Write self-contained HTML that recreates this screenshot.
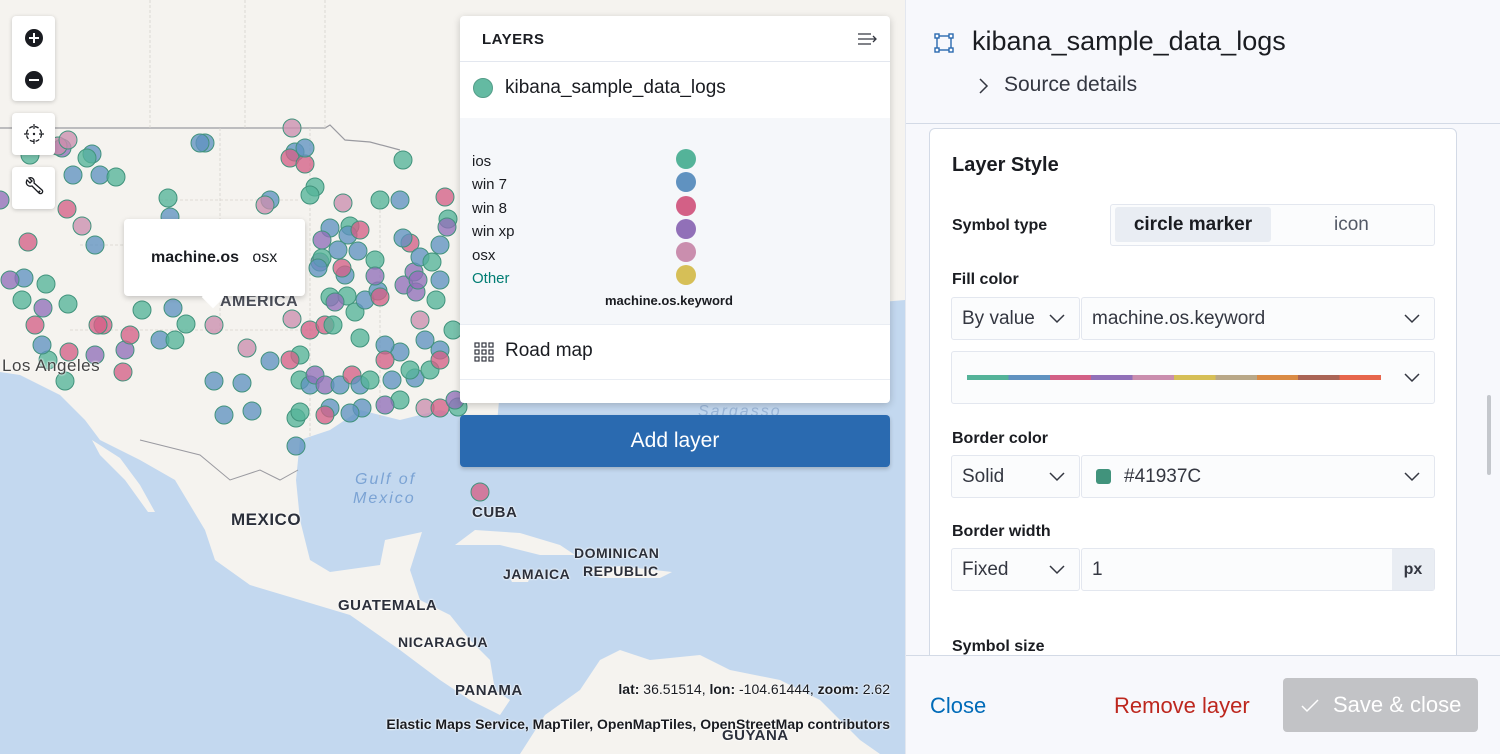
<!DOCTYPE html>
<html><head><meta charset="utf-8"><style>
*{box-sizing:border-box;margin:0;padding:0}
body{width:1500px;height:754px;overflow:hidden;font-family:"Liberation Sans",sans-serif;position:relative;background:#fff;color:#1a1c21}
.abs{position:absolute}
.ctl{position:absolute;left:12px;width:43px;background:#fff;border-radius:4px;box-shadow:0 1px 4px rgba(0,0,0,.2)}
.lbl{position:absolute;font-weight:bold;color:#2b2f3a;font-size:16px;letter-spacing:.5px;text-shadow:0 0 2px #fff,0 0 2px #fff}
.sel{position:absolute;background:#fbfcfd;border:1px solid #e3e7ef;border-radius:3px;font-size:19px;color:#343741;padding-left:10px;display:flex;align-items:center}
.chev{position:absolute;right:14px;top:50%;margin-top:-5px}
.flab{position:absolute;left:952px;font-size:16px;font-weight:bold;color:#1a1c21}
</style></head><body>
<svg class="abs" style="left:0;top:0" width="905" height="754" viewBox="0 0 905 754">
<rect width="905" height="754" fill="#c3d8ef"/>
<path d="M0,0 L905,0 L905,300 L560,330 L500,390 L495,445 L475,420 L440,410 L400,420 L360,410 L330,430 L300,440 L296,480 L300,520 L310,560 L330,572 L380,565 L385,540 L422,532 L410,570 L420,600 L450,615 L470,640 L490,660 L495,690 L510,700 L500,715 L470,700 L440,680 L400,650 L350,615 L300,600 L250,585 L215,560 L205,530 L175,480 L140,460 L100,440 L85,420 L60,395 L20,375 L0,372 Z" fill="#f5f3ef"/>
<path d="M92,440 L120,458 L140,485 L155,512 L148,512 L125,480 L100,455Z" fill="#f5f3ef"/>
<path d="M520,754 L545,715 L580,690 L600,660 L620,650 L650,660 L700,655 L730,670 L780,680 L820,700 L860,740 L880,754Z" fill="#f5f3ef"/>
<path d="M455,545 L475,530 L520,533 L560,545 L575,555 L540,555 L500,545 Z" fill="#f5f3ef"/>
<path d="M590,570 L620,566 L672,572 L660,578 L600,578Z" fill="#f5f3ef"/>
<path d="M510,578 L530,577 L528,582 L512,582Z" fill="#f5f3ef"/>
<path d="M0,128 L325,128 L330,125 L345,140 L370,142 L400,150" stroke="#9a9aa0" stroke-width="1.2" fill="none"/>
<path d="M140,440 L200,455 L230,480 L260,470 L280,480 L298,470" stroke="#9a9aa0" stroke-width="1" fill="none"/>
<g stroke="#d6d3cd" stroke-width=".8" fill="none" stroke-dasharray="3,2">
<path d="M150,0 L150,128 M245,0 L245,128 M325,0 L325,128 M220,128 L220,330 M160,200 L300,200 M80,245 L220,245 M70,330 L330,330 M310,128 L310,440 M380,200 L380,420"/>
</g>
<g id="dots" stroke="#41937C" stroke-width="1" fill-opacity=".78"></g>
<text x="355" y="484" font-family="Liberation Sans" font-style="italic" font-size="16" fill="#7ba3d4" letter-spacing="2">Gulf of</text>
<text x="353" y="503" font-family="Liberation Sans" font-style="italic" font-size="16" fill="#7ba3d4" letter-spacing="2">Mexico</text>
<text x="698" y="416" font-family="Liberation Sans" font-style="italic" font-size="16" fill="#9bb6d8" letter-spacing="2">Sargasso</text>
</svg>
<div class="lbl" style="left:2px;top:356px;font-weight:normal;color:#444;font-size:17px">Los Angeles</div>
<div class="lbl" style="left:220px;top:293px;color:#4a4d57">AMERICA</div>
<div class="lbl" style="left:231px;top:510px;font-size:17px">MEXICO</div>
<div class="lbl" style="left:472px;top:504px;font-size:15px">CUBA</div>
<div class="lbl" style="left:574px;top:545px;font-size:14px">DOMINICAN</div>
<div class="lbl" style="left:583px;top:563px;font-size:14px">REPUBLIC</div>
<div class="lbl" style="left:503px;top:566px;font-size:14px">JAMAICA</div>
<div class="lbl" style="left:338px;top:597px;font-size:15px">GUATEMALA</div>
<div class="lbl" style="left:398px;top:634px;font-size:14px">NICARAGUA</div>
<div class="lbl" style="left:455px;top:682px;font-size:15px">PANAMA</div>
<div class="lbl" style="left:722px;top:727px;font-size:15px">GUYANA</div>
<div class="abs" style="right:610px;top:681px;font-size:14px;color:#1a1c21;text-shadow:0 0 2px #fff,0 0 2px #fff"><b>lat:</b> 36.51514, <b>lon:</b> -104.61444, <b>zoom:</b> 2.62</div>
<div class="abs" style="right:610px;top:716px;font-size:14px;font-weight:bold;color:#1a1c21;text-shadow:0 0 2px #fff,0 0 2px #fff">Elastic Maps Service, MapTiler, OpenMapTiles, OpenStreetMap contributors</div>

<div class="ctl" style="top:16px;height:85px">
<svg class="abs" style="left:12px;top:12px" width="20" height="20"><circle cx="10" cy="10" r="9" fill="#1a1c21"/><path d="M10 5v10M5 10h10" stroke="#fff" stroke-width="2"/></svg>
<svg class="abs" style="left:12px;top:54px" width="20" height="20"><circle cx="10" cy="10" r="9" fill="#1a1c21"/><path d="M5 10h10" stroke="#fff" stroke-width="2"/></svg>
</div>
<div class="ctl" style="top:113px;height:42px">
<svg class="abs" style="left:12px;top:11px" width="20" height="20"><circle cx="10" cy="10" r="7.5" fill="none" stroke="#1a1c21" stroke-width="1.3" stroke-dasharray="4,2"/><path d="M10 0v5M10 15v5M0 10h5M15 10h5" stroke="#1a1c21" stroke-width="1.2"/><circle cx="10" cy="10" r="1.2" fill="#1a1c21"/></svg>
</div>
<div class="ctl" style="top:167px;height:42px">
<svg class="abs" style="left:11px;top:10px" width="22" height="22" viewBox="0 0 22 22"><path d="M4 3 L7 6 L9 4 L6 1 C9 0 12 2 11 6 L19 13 C21 15 18 18 16 16 L9 9 C5 10 2 7 4 3Z" fill="none" stroke="#1a1c21" stroke-width="1.3"/><circle cx="16.5" cy="14.5" r="1" fill="#1a1c21"/></svg>
</div>

<div class="abs" style="left:124px;top:219px;width:181px;height:77px;background:#fff;border-radius:4px;box-shadow:0 2px 6px rgba(0,0,0,.2)"></div>
<div class="abs" style="left:205px;top:289px;width:16px;height:16px;background:#fff;transform:rotate(45deg)"></div>
<div class="abs" style="left:151px;top:249px;font-size:16px"><b>machine.os</b>&nbsp;&nbsp; osx</div>

<div class="abs" style="left:460px;top:16px;width:430px;height:387px;background:#fff;border-radius:4px;box-shadow:0 2px 8px rgba(0,0,0,.2);overflow:hidden">
 <div class="abs" style="left:22px;top:15px;font-size:15px;font-weight:bold;letter-spacing:.5px">LAYERS</div>
 <svg class="abs" style="left:397px;top:15px" width="22" height="16"><path d="M1 3h13M1 8h18M1 13h13M16 5l3 3-3 3" stroke="#343741" stroke-width="1.3" fill="none"/></svg>
 <div class="abs" style="left:0;top:45px;width:430px;height:1px;background:#e3e7ef"></div>
 <div class="abs" style="left:13px;top:62px;width:20px;height:20px;border-radius:50%;background:#54b399;border:1px solid #41937C;opacity:.9"></div>
 <div class="abs" style="left:45px;top:61px;font-size:19px">kibana_sample_data_logs</div>
 <div class="abs" style="left:0;top:102px;width:430px;height:206px;background:#f5f7fa"></div>
 <div class="abs" style="left:12px;top:134px;font-size:15px;line-height:23.4px">ios<br>win 7<br>win 8<br>win xp<br>osx<br><span style="color:#017d73">Other</span></div>
 <div class="abs" style="left:216px;top:133px;width:20px;height:20px;border-radius:50%;background:#54b399"></div>
 <div class="abs" style="left:216px;top:156px;width:20px;height:20px;border-radius:50%;background:#6092c0"></div>
 <div class="abs" style="left:216px;top:180px;width:20px;height:20px;border-radius:50%;background:#d36086"></div>
 <div class="abs" style="left:216px;top:203px;width:20px;height:20px;border-radius:50%;background:#9170b8"></div>
 <div class="abs" style="left:216px;top:226px;width:20px;height:20px;border-radius:50%;background:#ca8eae"></div>
 <div class="abs" style="left:216px;top:249px;width:20px;height:20px;border-radius:50%;background:#d6bf57"></div>
 <div class="abs" style="left:145px;top:277px;font-size:13px;font-weight:bold">machine.os.keyword</div>
 <div class="abs" style="left:0;top:308px;width:430px;height:1px;background:#e9edf3"></div>
 <svg class="abs" style="left:14px;top:326px" width="20" height="20"><g fill="none" stroke="#343741" stroke-width="1.2"><rect x="1" y="1" width="4" height="4"/><rect x="8" y="1" width="4" height="4"/><rect x="15" y="1" width="4" height="4"/><rect x="1" y="8" width="4" height="4"/><rect x="8" y="8" width="4" height="4"/><rect x="15" y="8" width="4" height="4"/><rect x="1" y="15" width="4" height="4"/><rect x="8" y="15" width="4" height="4"/><rect x="15" y="15" width="4" height="4"/></g></svg>
 <div class="abs" style="left:45px;top:324px;font-size:19px">Road map</div>
 <div class="abs" style="left:0;top:363px;width:430px;height:1px;background:#e9edf3"></div>
</div>
<div class="abs" style="left:460px;top:415px;width:430px;height:52px;background:#2a6ab0;border-radius:4px;box-shadow:0 2px 4px rgba(0,0,0,.2);color:#fff;font-size:21px;text-align:center;line-height:52px">Add layer</div>

<div class="abs" style="left:905px;top:0;width:595px;height:754px;background:#f7f8fc;border-left:1px solid #e3e7ef"></div>
<svg class="abs" style="left:934px;top:33px" width="20" height="20"><g fill="none" stroke="#2a6ab0" stroke-width="1.4"><rect x="3" y="3" width="14" height="14"/><rect x="1" y="1" width="4" height="4" fill="#fff"/><rect x="15" y="1" width="4" height="4" fill="#fff"/><rect x="1" y="15" width="4" height="4" fill="#fff"/><rect x="15" y="15" width="4" height="4" fill="#fff"/></g></svg>
<div class="abs" style="left:972px;top:26px;font-size:27px;color:#1a1c21">kibana_sample_data_logs</div>
<svg class="abs" style="left:977px;top:77px" width="12" height="18"><path d="M3 2l7 7-7 7" fill="none" stroke="#343741" stroke-width="1.5"/></svg>
<div class="abs" style="left:1004px;top:73px;font-size:21px;color:#343741">Source details</div>
<div class="abs" style="left:906px;top:123px;width:594px;height:1px;background:#d3dae6"></div>
<div class="abs" style="left:929px;top:128px;width:528px;height:540px;background:#fff;border:1px solid #d3dae6;border-radius:6px"></div>
<div class="abs" style="left:952px;top:154px;font-size:20px;font-weight:bold">Layer Style</div>
<div class="flab" style="top:217px">Symbol type</div>
<div class="abs" style="left:1110px;top:204px;width:325px;height:42px;background:#fbfcfd;border:1px solid #e3e7ef;border-radius:3px"></div>
<div class="abs" style="left:1115px;top:207px;width:156px;height:35px;background:#e9edf3;border-radius:3px;font-size:19px;font-weight:bold;text-align:center;line-height:35px;color:#1a1c21">circle marker</div>
<div class="abs" style="left:1334px;top:214px;font-size:19px;color:#535966">icon</div>
<div class="flab" style="top:271px">Fill color</div>
<div class="sel" style="left:951px;top:297px;width:129px;height:43px">By value<svg class="chev" width="16" height="10"><path d="M1 1l7 7 7-7" fill="none" stroke="#343741" stroke-width="1.5"/></svg></div>
<div class="sel" style="left:1081px;top:297px;width:354px;height:43px">machine.os.keyword<svg class="chev" width="16" height="10"><path d="M1 1l7 7 7-7" fill="none" stroke="#343741" stroke-width="1.5"/></svg></div>
<div class="sel" style="left:951px;top:351px;width:484px;height:53px"><div style="position:absolute;left:15px;top:23px;width:414px;height:5px;background:linear-gradient(90deg,#54b399 0 10%,#6092c0 10% 20%,#d36086 20% 30%,#9170b8 30% 40%,#ca8eae 40% 50%,#d6bf57 50% 60%,#b9a888 60% 70%,#da8b45 70% 80%,#aa6556 80% 90%,#e7664c 90%)"></div><svg class="chev" width="16" height="10"><path d="M1 1l7 7 7-7" fill="none" stroke="#343741" stroke-width="1.5"/></svg></div>
<div class="flab" style="top:430px">Border color</div>
<div class="sel" style="left:951px;top:455px;width:129px;height:43px">Solid<svg class="chev" width="16" height="10"><path d="M1 1l7 7 7-7" fill="none" stroke="#343741" stroke-width="1.5"/></svg></div>
<div class="sel" style="left:1081px;top:455px;width:354px;height:43px"><span style="display:inline-block;width:15px;height:15px;background:#41937C;border-radius:3px;margin:0 13px 0 4px"></span>#41937C<svg class="chev" width="16" height="10"><path d="M1 1l7 7 7-7" fill="none" stroke="#343741" stroke-width="1.5"/></svg></div>
<div class="flab" style="top:523px">Border width</div>
<div class="sel" style="left:951px;top:548px;width:129px;height:43px">Fixed<svg class="chev" width="16" height="10"><path d="M1 1l7 7 7-7" fill="none" stroke="#343741" stroke-width="1.5"/></svg></div>
<div class="sel" style="left:1081px;top:548px;width:354px;height:43px">1<div style="position:absolute;right:0;top:0;width:42px;height:41px;background:#e9edf3;font-size:16px;font-weight:bold;text-align:center;line-height:41px">px</div></div>
<div class="flab" style="top:638px">Symbol size</div>
<div class="abs" style="left:1487px;top:395px;width:4px;height:80px;background:#c4c7cc;border-radius:2px"></div>
<div class="abs" style="left:906px;top:655px;width:594px;height:99px;background:#f7f8fc;border-top:1px solid #d3dae6"></div>
<div class="abs" style="left:930px;top:693px;font-size:22px;color:#006bb8">Close</div>
<div class="abs" style="left:1114px;top:693px;font-size:22px;color:#bd271e">Remove layer</div>
<div class="abs" style="left:1283px;top:678px;width:195px;height:54px;background:#c2c3c6;border-radius:4px;color:#fff;font-size:22px;line-height:54px"><svg style="position:absolute;left:18px;top:21px" width="18" height="14"><path d="M1 7l5 5 11-11" fill="none" stroke="#fff" stroke-width="1.5"/></svg><span style="position:absolute;left:50px">Save &amp; close</span></div>

<script>
var C={g:"#54b399",b:"#6092c0",p:"#d36086",u:"#9170b8",l:"#ca8eae"};
var d="292,128,l 205,143,b 200,143,b 295,152,b 290,158,p 305,164,p 62,148,u 58,146,l 30,155,g 92,154,b 100,175,b 73,175,b 116,177,g 168,198,g 170,217,b 67,209,p 82,226,l 95,245,b 28,242,p 0,200,u 24,278,b 22,300,g 43,308,u 35,325,p 10,280,u 46,284,g 103,325,p 98,325,p 95,355,u 125,350,u 130,335,p 160,340,b 175,340,g 186,324,g 214,325,l 247,348,l 270,361,b 214,381,b 242,383,b 252,411,b 224,415,b 296,446,b 296,418,g 123,372,p 69,352,p 48,360,g 65,381,g 68,304,g 30,135,g 305,148,b 315,187,g 310,195,g 270,200,b 265,205,l 343,203,l 350,226,g 348,235,b 330,228,b 322,240,u 320,262,u 338,250,b 345,275,b 322,258,g 318,268,b 358,251,b 342,268,p 330,297,g 347,296,g 292,319,l 310,330,p 325,325,p 333,325,g 335,302,u 355,312,g 365,300,b 360,338,g 378,291,b 380,297,p 404,285,u 410,243,p 403,238,b 375,260,g 375,276,u 414,272,u 420,257,b 448,219,g 445,197,p 447,227,u 440,245,b 432,262,g 436,300,g 416,292,u 418,280,u 440,280,b 400,200,b 403,160,g 380,200,g 360,230,p 420,320,l 425,340,b 440,350,b 453,330,g 400,352,b 385,345,b 385,360,p 300,355,g 290,360,p 300,380,g 310,385,b 315,375,u 325,385,u 340,385,b 352,375,p 360,385,b 370,380,g 392,380,b 415,378,b 400,400,g 385,405,u 425,408,l 440,408,p 458,407,g 455,400,u 330,408,b 325,415,p 300,412,g 362,408,b 350,413,b 430,370,g 410,370,g 440,360,p 480,492,p 87,158,g 68,140,l 42,345,b 142,310,g 173,308,b";
var s="";d.split(" ").forEach(function(t){var a=t.split(",");s+='<circle cx="'+a[0]+'" cy="'+a[1]+'" r="9" fill="'+C[a[2]]+'"/>';});
document.getElementById("dots").innerHTML=s;
</script>
</body></html>
